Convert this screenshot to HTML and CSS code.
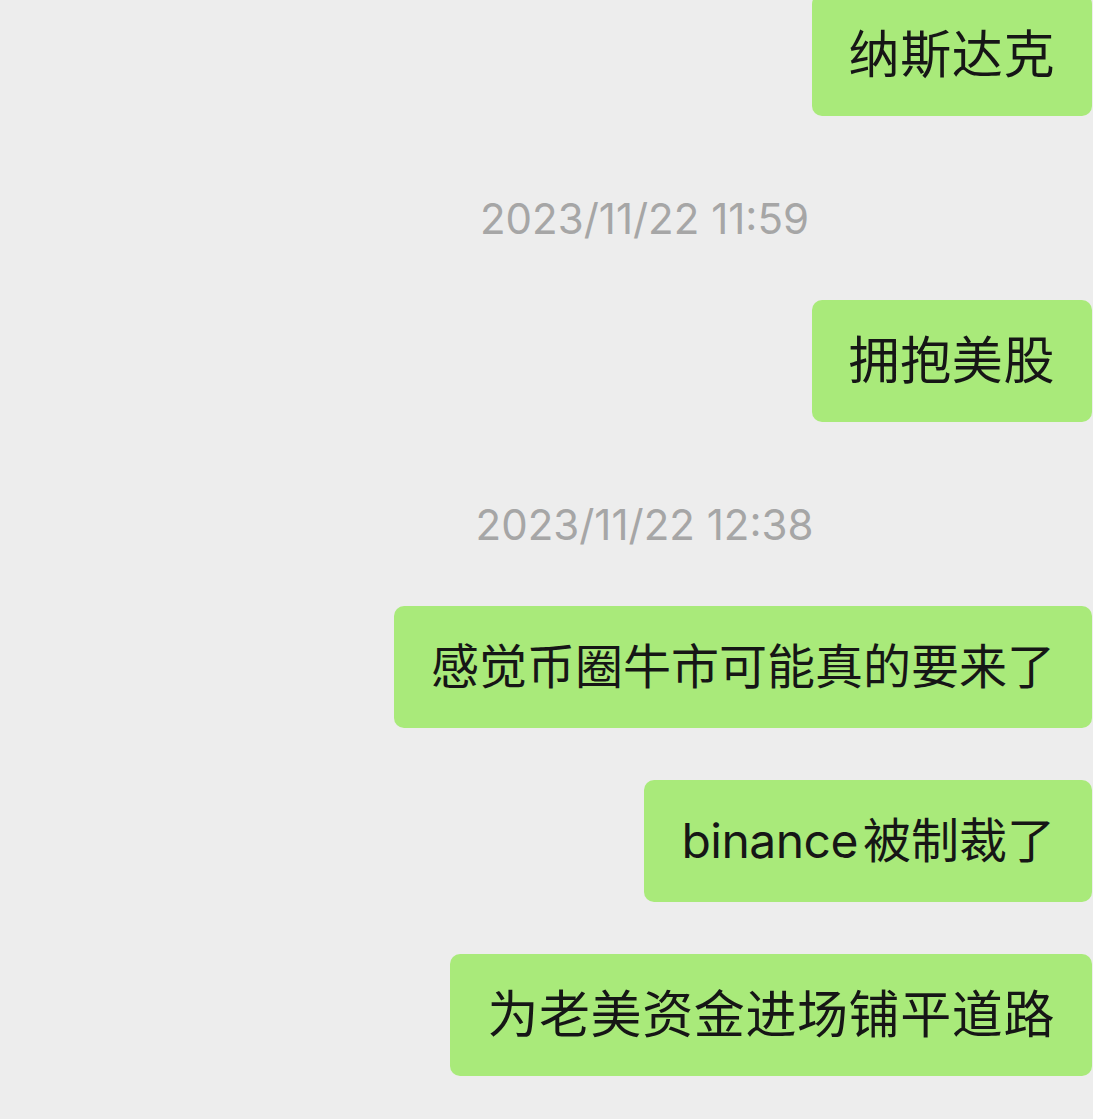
FILE: index.html
```html
<!DOCTYPE html>
<html lang="zh-CN">
<head>
<meta charset="utf-8">
<title>Chat</title>
<link rel="stylesheet" href="styles.css">
</head>
<body>
<main class="chat">
  <div class="row"><div class="bubble first">纳斯达克</div></div>
  <div class="time">2023/11/22 11:59</div>
  <div class="row"><div class="bubble">拥抱美股</div></div>
  <div class="time">2023/11/22 12:38</div>
  <div class="row"><div class="bubble small">感觉币圈牛市可能真的要来了</div></div>
  <div class="row gap"><div class="bubble small"><span class="latin">binance</span>被制裁了</div></div>
  <div class="row gap"><div class="bubble">为老美资金进场铺平道路</div></div>
</main>
</body>
</html>
```
FILE: styles.css
```css
html, body {
  margin: 0;
  padding: 0;
  background: #ededed;
}
body {
  width: 1093px;
  height: 1119px;
  overflow: hidden;
  font-family: "Inter", "Noto Sans CJK SC", sans-serif;
}
.chat {
  display: flex;
  flex-direction: column;
}
.row {
  display: flex;
  justify-content: flex-end;
  padding-right: 1px;
}
.row.gap {
  margin-top: 52px;
}
.bubble {
  background: #a9ea7a;
  color: #161616;
  font-size: 51px;
  letter-spacing: 0.6px;
  line-height: 122px;
  height: 122px;
  padding: 0 37px 0 37px;
  border-radius: 10px;
  white-space: nowrap;
}
.bubble.first {
  margin-top: -6px;
}
.bubble.small {
  font-size: 48px;
  letter-spacing: 0;
}
.latin {
  letter-spacing: -0.5px;
  margin-right: 5px;
}
.time {
  height: 184px;
  box-sizing: border-box;
  padding: 73px 0 0 196px;
  line-height: 60px;
  font-size: 42px;
  color: #a6a6a6;
  text-align: center;
}
```
